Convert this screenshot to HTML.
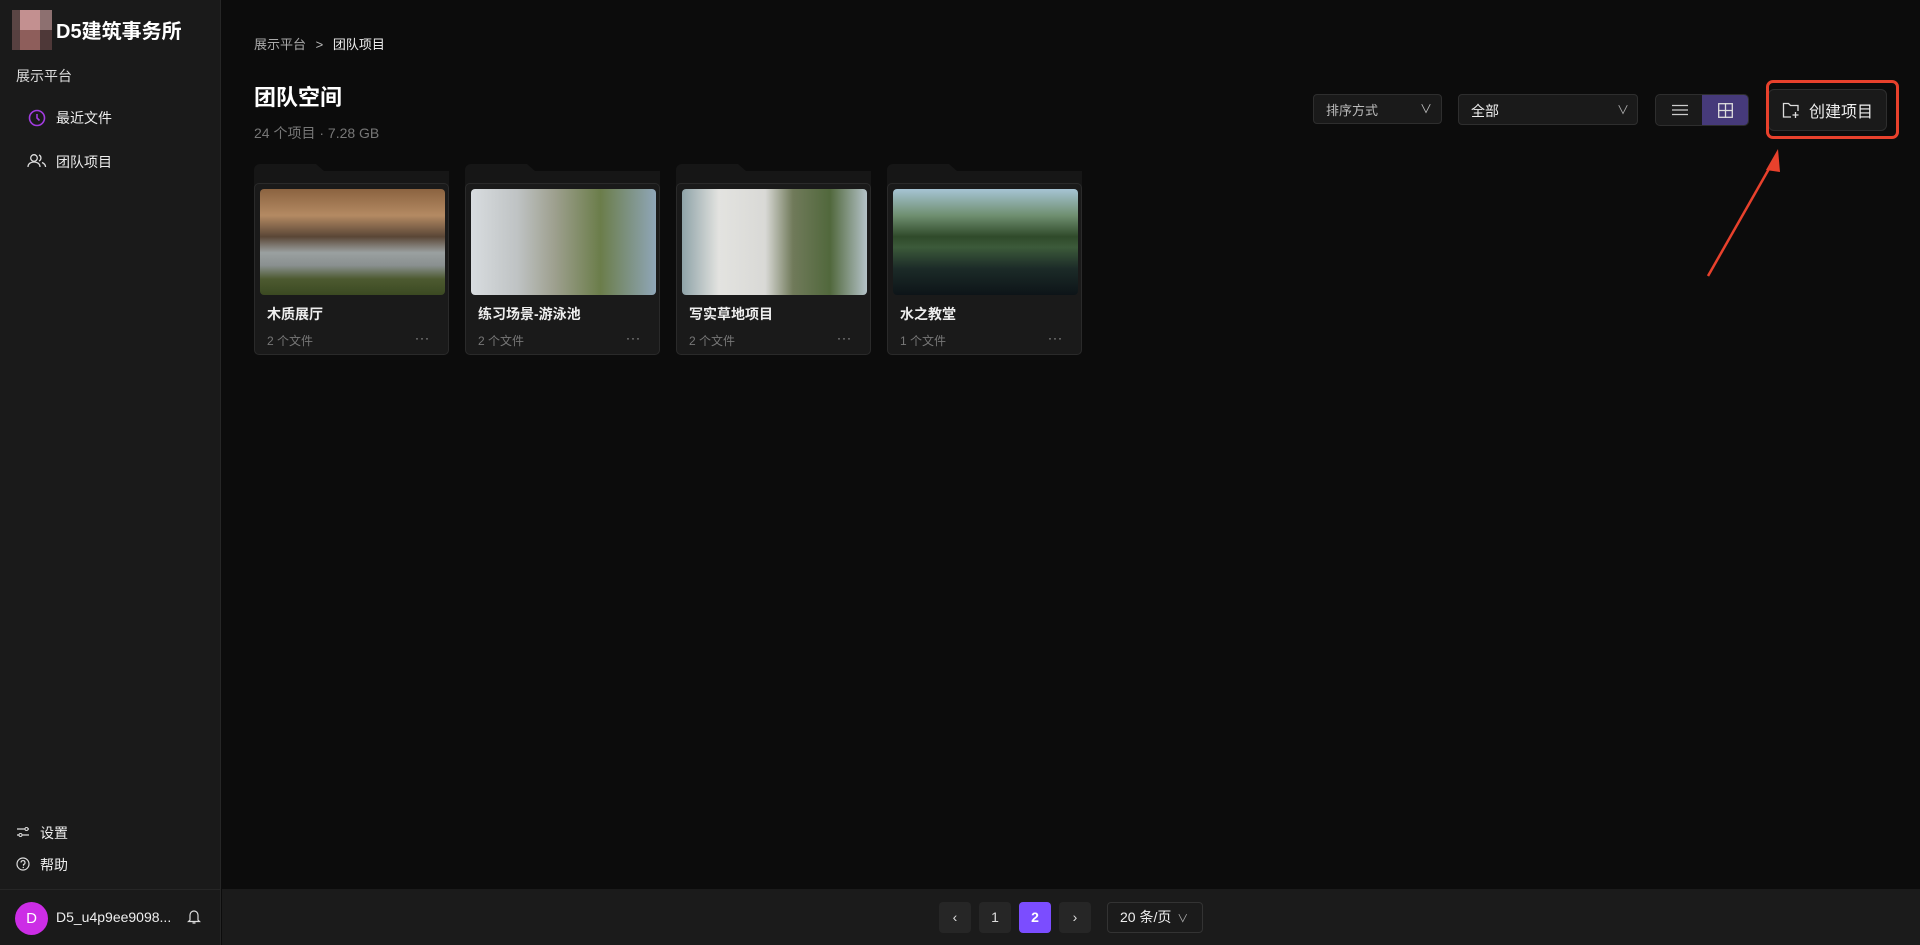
<!DOCTYPE html>
<html><head><meta charset="utf-8"><style>
*{box-sizing:border-box;margin:0;padding:0}
body{width:1920px;height:945px;background:#0c0c0c;font-family:"Liberation Sans","Noto Sans CJK SC",sans-serif;color:#e8e8e8;position:relative;overflow:hidden}
.abs{position:absolute}
.side{left:0;top:0;width:221px;height:945px;background:#1a1a1a;border-right:1px solid #262626}
.bottom{left:222px;top:889px;width:1698px;height:56px;background:#1b1b1b}
.sidebottom{left:0;top:889px;width:221px;height:56px;border-top:1px solid #262626}
.card{position:absolute;top:164px;width:195px;height:191px}
.tab{position:absolute;left:0;top:0;width:195px;height:30px;background:#161616;border-radius:6px;clip-path:polygon(0 0,62px 0,70px 7px,195px 7px,195px 30px,0 30px)}
.body{position:absolute;left:0;top:19px;width:195px;height:172px;background:#1a1a1a;border:1px solid #2a2a2a;border-radius:5px}
.img{position:absolute;left:5px;top:5px;width:185px;height:106px;border-radius:4px}
.ct{position:absolute;left:12px;top:120px;font-size:14px;color:#eee;font-weight:bold}
.cs{position:absolute;left:12px;top:148px;font-size:12px;color:#777}
.dots{position:absolute;right:18px;top:150px;font-size:12px;color:#aaa;letter-spacing:1px;line-height:8px}
.dd{background:#1a1a1a;border:1px solid #2e2e2e;border-radius:4px}
.pg{position:absolute;top:902px;width:32px;height:31px;background:#262626;border-radius:4px;font-size:14px;text-align:center;line-height:31px;color:#ddd}
</style></head><body>
<div class="abs side"></div>
<div class="abs sidebottom"></div>
<div class="abs" style="left:12px;top:10px;width:40px;height:40px;background:linear-gradient(90deg,#5a4544 0 20%,#c39090 20% 70%,#8d7070 70%);"></div>
<div class="abs" style="left:12px;top:30px;width:40px;height:20px;background:linear-gradient(90deg,#574040 0 20%,#8e5e5b 20% 70%,#4e3838 70%);"></div>
<div class="abs" style="left:56px;top:15px;font-size:20px;font-weight:bold;color:#fff">D5建筑事务所</div>
<div class="abs" style="left:16px;top:66px;font-size:14px;color:#ddd">展示平台</div>
<svg class="abs" style="left:28px;top:109px" width="18" height="18" viewBox="0 0 18 18"><circle cx="9" cy="9" r="7.5" fill="none" stroke="#a23ce0" stroke-width="1.6"/><path d="M9 5v4l2.5 2.5" fill="none" stroke="#a23ce0" stroke-width="1.6"/></svg>
<div class="abs" style="left:56px;top:108px;font-size:14px;color:#eee">最近文件</div>
<svg class="abs" style="left:27px;top:153px" width="20" height="16" viewBox="0 0 20 16"><circle cx="7" cy="5" r="3.3" fill="none" stroke="#ddd" stroke-width="1.3"/><path d="M1 14c0-3.5 3-5 6-5s6 1.5 6 5" fill="none" stroke="#ddd" stroke-width="1.3"/><path d="M12 2a3.3 3.3 0 0 1 0 6M15 9.5c2 .8 3.5 2.3 3.5 4.5" fill="none" stroke="#ddd" stroke-width="1.3"/></svg>
<div class="abs" style="left:56px;top:152px;font-size:14px;color:#eee">团队项目</div>
<svg class="abs" style="left:16px;top:826px" width="14" height="12" viewBox="0 0 14 12"><path d="M1 3h8M12 3h1M1 9h2M6 9h7" stroke="#ddd" stroke-width="1.2"/><circle cx="10.5" cy="3" r="1.5" fill="none" stroke="#ddd"/><circle cx="4.5" cy="9" r="1.5" fill="none" stroke="#ddd"/></svg>
<div class="abs" style="left:40px;top:823px;font-size:14px;color:#eee">设置</div>
<svg class="abs" style="left:16px;top:857px" width="14" height="14" viewBox="0 0 14 14"><circle cx="7" cy="7" r="6" fill="none" stroke="#ddd" stroke-width="1.2"/><path d="M5 5.5a2 2 0 1 1 2.5 2v1.2" fill="none" stroke="#ddd" stroke-width="1.2"/><circle cx="7.3" cy="10.5" r=".7" fill="#ddd"/></svg>
<div class="abs" style="left:40px;top:855px;font-size:14px;color:#eee">帮助</div>
<div class="abs" style="left:15px;top:902px;width:33px;height:33px;border-radius:50%;background:#cc2de6;color:#fff;font-size:15px;text-align:center;line-height:33px">D</div>
<div class="abs" style="left:56px;top:909px;font-size:14px;color:#eee">D5_u4p9ee9098...</div>
<svg class="abs" style="left:187px;top:908px" width="14" height="17" viewBox="0 0 14 17"><path d="M3 12V7a4 4 0 0 1 8 0v5l1.5 1.5h-11z M5.5 15h3" fill="none" stroke="#ddd" stroke-width="1.2"/></svg>

<div class="abs" style="left:254px;top:34px;font-size:13px;color:#aaa">展示平台 <span style="margin:0 6px;color:#bbb">&gt;</span> <span style="color:#eee">团队项目</span></div>
<div class="abs" style="left:254px;top:80px;font-size:22px;font-weight:bold;color:#fff">团队空间</div>
<div class="abs" style="left:254px;top:123px;font-size:14px;color:#777">24 个项目 · 7.28 GB</div>

<div class="abs dd" style="left:1313px;top:94px;width:129px;height:30px"><span class="abs" style="left:12px;top:5px;font-size:13px;color:#bbb">排序方式</span><span class="abs" style="left:106px;top:5px;font-size:12px;color:#bbb">∨</span></div>
<div class="abs dd" style="left:1458px;top:94px;width:180px;height:31px"><span class="abs" style="left:12px;top:6px;font-size:14px;color:#eee">全部</span><span class="abs" style="left:158px;top:6px;font-size:12px;color:#aaa">∨</span></div>
<div class="abs" style="left:1655px;top:94px;width:94px;height:32px;border-radius:5px;background:#1a1a1a;border:1px solid #2e2e2e;overflow:hidden"><div class="abs" style="left:46px;top:0;width:48px;height:32px;background:#463a7a"></div>
<svg class="abs" style="left:16px;top:9px" width="16" height="12"><path d="M0 1.5h16M0 6h16M0 10.5h16" stroke="#ccc" stroke-width="1.3"/></svg>
<svg class="abs" style="left:62px;top:8px" width="15" height="15"><rect x=".7" y=".7" width="13.6" height="13.6" fill="none" stroke="#ddd" stroke-width="1.3"/><path d="M7.5 0v15M0 7.5h15" stroke="#ddd" stroke-width="1.3"/></svg></div>
<div class="abs dd" style="left:1768px;top:89px;width:119px;height:42px;border-radius:6px"><svg class="abs" style="left:13px;top:12px" width="18" height="17" viewBox="0 0 18 17"><path d="M9 15H1.5V1.5h5l2 2h7.5V9" fill="none" stroke="#ddd" stroke-width="1.3"/><path d="M13.5 10v6M10.5 13h6" stroke="#ddd" stroke-width="1.3"/></svg><span class="abs" style="left:40px;top:8px;font-size:16px;color:#eee">创建项目</span></div>
<div class="abs" style="left:1766px;top:80px;width:133px;height:59px;border:3px solid #e8412c;border-radius:7px"></div>
<svg class="abs" style="left:1700px;top:140px" width="90" height="140"><path d="M8 136L74 20" stroke="#e8412c" stroke-width="2.5"/><path d="M78 9L66 30L80 32Z" fill="#e8412c"/></svg>

<div class="card" style="left:254px"><div class="tab"></div><div class="body"><div class="img" style="background:linear-gradient(180deg,#8b6340 0%,#b48a63 25%,#5a4636 45%,#9aa0a0 60%,#8a9090 72%,#4d5a30 85%,#3b4a22 100%)"></div><div class="ct">木质展厅</div><div class="cs">2 个文件</div><div class="dots">···</div></div></div>
<div class="card" style="left:465px"><div class="tab"></div><div class="body"><div class="img" style="background:linear-gradient(90deg,#d8dcdf 0%,#bfc3c4 25%,#9ea08f 45%,#6b7d4a 70%,#8fa6b8 100%)"></div><div class="ct">练习场景-游泳池</div><div class="cs">2 个文件</div><div class="dots">···</div></div></div>
<div class="card" style="left:676px"><div class="tab"></div><div class="body"><div class="img" style="background:linear-gradient(90deg,#8fa3a8 0%,#e3e3e0 20%,#d9d9d6 45%,#707a5a 60%,#51683c 80%,#b4c2c8 100%)"></div><div class="ct">写实草地项目</div><div class="cs">2 个文件</div><div class="dots">···</div></div></div>
<div class="card" style="left:887px"><div class="tab"></div><div class="body"><div class="img" style="background:linear-gradient(180deg,#a6c4d4 0%,#6f8f70 25%,#2f4a2a 45%,#3c5a3a 55%,#1c2b28 75%,#0d1418 100%)"></div><div class="ct">水之教堂</div><div class="cs">1 个文件</div><div class="dots">···</div></div></div>

<div class="abs bottom"></div>
<div class="pg" style="left:939px">‹</div>
<div class="pg" style="left:979px">1</div>
<div class="pg" style="left:1019px;background:#7b4dff;color:#fff;font-weight:bold">2</div>
<div class="pg" style="left:1059px">›</div>
<div class="abs" style="left:1107px;top:902px;width:96px;height:31px;border:1px solid #333;border-radius:4px;font-size:14px;line-height:29px;padding-left:12px;color:#eee">20 条/页 <span style="font-size:11px;color:#aaa;margin-left:2px">∨</span></div>
</body></html>
